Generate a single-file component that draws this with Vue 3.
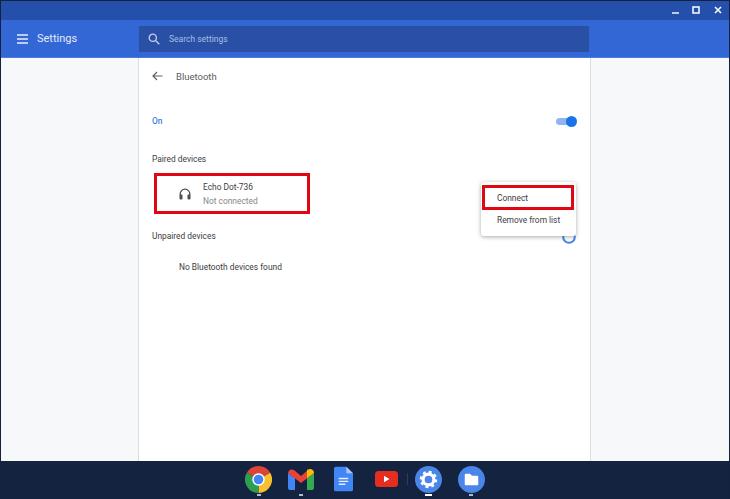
<template>
  <div class="window">
    <div class="title-bar">
      <svg class="win-icon minimize" width="11" height="11" viewBox="0 0 11 11"><path d="M1 8h7" stroke="#fff" stroke-width="1.4" /></svg>
      <svg class="win-icon" width="11" height="11" viewBox="0 0 11 11"><rect x="2" y="2" width="6" height="6" fill="none" stroke="#fff" stroke-width="1.5" /></svg>
      <svg class="win-icon" width="11" height="11" viewBox="0 0 11 11"><path d="M2 2l6 6M8 2l-6 6" stroke="#fff" stroke-width="1.5" /></svg>
    </div>

    <header class="app-bar">
      <div class="brand">
        <svg width="11" height="10" viewBox="0 0 11 10"><path d="M0 1h11M0 5h11M0 9h11" stroke="#e8eefb" stroke-width="1.3" /></svg>
        <span>Settings</span>
      </div>
      <div class="search">
        <svg width="12" height="12" viewBox="0 0 12 12" fill="none" stroke="#c3d0ec" stroke-width="1.3"><circle cx="4.8" cy="4.8" r="3.6" /><path d="M7.5 7.5L11.3 11.3" /></svg>
        <span>Search settings</span>
      </div>
    </header>

    <main class="content">
      <section class="card">
        <div class="page-title">
          <svg width="11" height="10" viewBox="0 0 11 10" fill="none" stroke="#5f6368" stroke-width="1.2"><path d="M10.5 5H1M5 1L1 5l4 4" /></svg>
          <span>Bluetooth</span>
        </div>

        <div class="toggle-row">
          <span class="on-label">On</span>
          <span class="toggle"><i></i></span>
        </div>

        <h2 class="paired-title">Paired devices</h2>
        <div class="device-row">
          <svg width="12" height="12" viewBox="0 0 12 12"><path d="M1.2 7V6a4.8 4.8 0 0 1 9.6 0v1" fill="none" stroke="#4b4e52" stroke-width="1.3" /><rect x="0.5" y="6.5" width="3" height="5" rx="1" fill="#4b4e52" /><rect x="8.5" y="6.5" width="3" height="5" rx="1" fill="#4b4e52" /></svg>
          <div class="device-text">
            <div class="device-name">Echo Dot-736</div>
            <div class="device-status">Not connected</div>
          </div>
        </div>

        <div class="unpaired-row">
          <h2>Unpaired devices</h2>
          <svg class="spinner" width="14" height="14" viewBox="0 0 14 14"><circle cx="7" cy="7" r="5.8" fill="none" stroke="#4285e8" stroke-width="2" /></svg>
        </div>
        <p class="empty">No Bluetooth devices found</p>

        <div class="device-mark"></div>
        <div class="menu">
          <div class="menu-item connect">Connect</div>
          <div class="menu-item">Remove from list</div>
        </div>
      </section>
    </main>

    <footer class="shelf">
      <span class="app running">
        <svg width="27" height="27" viewBox="0 0 26 26">
          <path d="M13 13L24.26 6.5A13 13 0 0 0 1.74 6.5z" fill="#db4437" />
          <path d="M13 13L24.26 6.5A13 13 0 0 1 13 26z" fill="#fbc02d" />
          <path d="M13 13V26A13 13 0 0 1 1.74 6.5z" fill="#2f9e4f" />
          <circle cx="13" cy="13" r="6" fill="#fff" />
          <circle cx="13" cy="13" r="4.6" fill="#4285f4" />
        </svg>
      </span>
      <span class="app running">
        <svg width="28" height="24" viewBox="0 0 28 24">
          <path d="M1 6l7 5v12H3a2 2 0 0 1-2-2z" fill="#4285f4" />
          <path d="M27 6l-7 5v12h5a2 2 0 0 0 2-2z" fill="#34a853" />
          <path d="M1 6a4 4 0 0 1 6-3l7 6 7-6a4 4 0 0 1 6 3l-13 10z" fill="#ea4335" />
          <path d="M20 3l1-.5a4 4 0 0 1 6 3.500l-7 5z" fill="#fbbc04" />
        </svg>
      </span>
      <span class="app">
        <svg width="19" height="26" viewBox="0 0 20 26">
          <path d="M2 0h11l7 7v17a2 2 0 0 1-2 2H2a2 2 0 0 1-2-2V2a2 2 0 0 1 2-2z" fill="#4285f4" />
          <path d="M13 0l7 7h-7z" fill="#a8c7fa" />
          <path d="M5 12.500h10M5 15.500h10M5 18.500h7" stroke="#e8f0fe" stroke-width="1.400" />
        </svg>
      </span>
      <span class="app yt">
        <svg width="23" height="16" viewBox="0 0 23 16">
          <rect width="23" height="16" rx="3.500" fill="#e62d1f" />
          <path d="M9 4.800v6.400l5.500-3.200z" fill="#fff" />
        </svg>
      </span>
      <span class="app active">
        <svg width="27" height="27" viewBox="0 0 26 26">
          <circle cx="13" cy="13" r="13" fill="#4a86e8" />
          <circle cx="13" cy="13" r="5.200" fill="none" stroke="#fff" stroke-width="3" />
          <circle cx="13" cy="13" r="7.200" fill="none" stroke="#fff" stroke-width="2.400" stroke-dasharray="2.800 2.850" />
        </svg>
      </span>
      <span class="app running">
        <svg width="27" height="27" viewBox="0 0 26 26">
          <circle cx="13" cy="13" r="13" fill="#4a86e8" />
          <path d="M6.500 8.500a1 1 0 0 1 1-1h4l2 2h5a1 1 0 0 1 1 1v7a1 1 0 0 1-1 1h-11a1 1 0 0 1-1-1z" fill="#fff" />
        </svg>
      </span>
    </footer>
  </div>
</template>

<script setup>
</script>

<style>
html,
body {
  margin: 0;
  background: #fff;
}
</style>

<style scoped>
.window {
  width: 730px;
  height: 499px;
  box-sizing: border-box;
  display: flex;
  flex-direction: column;
  border: 1px solid #14213f;
  border-bottom: none;
  overflow: hidden;
  font-family: Roboto, "Liberation Sans", sans-serif;
  font-size: 8.4px;
  color: #3c4043;
}

.title-bar {
  height: 19px;
  flex: none;
  display: flex;
  justify-content: flex-end;
  align-items: center;
  gap: 11px;
  padding-right: 5px;
  background: #2450ab;
}

.minimize {
  margin-right: -2px;
}

.app-bar {
  height: 38px;
  box-sizing: border-box;
  flex: none;
  display: flex;
  align-items: center;
  background: #3367d6;
  border-bottom: 1px solid #4a7bdf;
}

.brand {
  width: 138px;
  flex: none;
  box-sizing: border-box;
  padding-left: 16px;
  display: flex;
  align-items: center;
  gap: 9px;
  color: #e3eafa;
  font-size: 11px;
}

.search {
  width: 450px;
  height: 26px;
  box-sizing: border-box;
  padding-left: 9px;
  display: flex;
  align-items: center;
  gap: 9px;
  background: #2a50a5;
  color: #a9bce4;
  font-size: 8.5px;
}

.content {
  flex: 1;
  min-height: 0;
  display: flex;
  justify-content: center;
  background: #f7f8f9;
  padding-right: 1px;
}

.card {
  position: relative;
  width: 453px;
  box-sizing: border-box;
  padding: 0 13px;
  background: #fff;
  border: solid #dcdee1;
  border-width: 0 1px;
}

.page-title {
  height: 36px;
  display: flex;
  align-items: center;
  gap: 13px;
  font-size: 9.5px;
  color: #5a5d61;
}

.toggle-row {
  margin-top: 9px;
  height: 36px;
  display: flex;
  align-items: center;
  justify-content: space-between;
}

.on-label {
  color: #3f7fe6;
  font-weight: 500;
}

.toggle {
  position: relative;
  width: 19px;
  height: 7px;
  margin-right: 2px;
  border-radius: 4px;
  background: #8fb4ef;
}

.toggle i {
  position: absolute;
  right: -2px;
  top: -2px;
  width: 11px;
  height: 11px;
  border-radius: 50%;
  background: #1a73e8;
}

h2 {
  margin: 0;
  font-size: 8.4px;
  font-weight: 400;
}

.paired-title {
  margin-top: 14px;
  line-height: 12px;
}

.device-row {
  margin-top: 12px;
  height: 34px;
  padding-left: 27px;
  display: flex;
  align-items: center;
  gap: 12px;
}

.device-name,
.device-status {
  line-height: 14px;
}

.device-status {
  color: #85888c;
}

.unpaired-row {
  margin-top: 19px;
  height: 12px;
  display: flex;
  align-items: center;
  justify-content: space-between;
}

.spinner {
  margin-right: 1px;
  margin-top: 2px;
}

.empty {
  margin: 19px 0 0;
  padding-left: 27px;
  line-height: 12px;
}

.device-mark {
  position: absolute;
  left: 15px;
  top: 115px;
  width: 156px;
  height: 41px;
  box-sizing: border-box;
  border: 3px solid #e00712;
}

.menu {
  position: absolute;
  left: 342px;
  top: 124px;
  width: 95px;
  height: 54px;
  box-sizing: border-box;
  padding-top: 3px;
  background: #fff;
  border-radius: 3px;
  box-shadow: 0 1px 4px rgba(60, 64, 67, 0.45);
}

.menu-item {
  height: 21px;
  padding-left: 16px;
  line-height: 21px;
}

.menu-item.connect {
  height: 25px;
  margin: 0 2px 0 1px;
  line-height: 20px;
  box-sizing: border-box;
  padding-left: 12px;
  border: 3px solid #e00712;
}

.shelf {
  position: relative;
  height: 38px;
  box-sizing: border-box;
  flex: none;
  display: flex;
  align-items: center;
  justify-content: center;
  gap: 14.6px;
  margin: 0 -1px;
  padding-bottom: 2px;
  background: #14233f;
}

.app {
  position: relative;
  width: 28px;
  height: 28px;
  display: flex;
  align-items: center;
  justify-content: center;
}

.app.yt::after {
  content: "";
  position: absolute;
  right: -8px;
  top: 8px;
  width: 1px;
  height: 12px;
  background: #2f3e5a;
}

.app.running::after,
.app.active::after {
  content: "";
  position: absolute;
  left: 50%;
  bottom: -3px;
  width: 4px;
  height: 2px;
  margin-left: -2px;
  background: #aeb8cb;
}

.app.active::after {
  width: 7px;
  margin-left: -3.5px;
  background: #fff;
}
</style>
